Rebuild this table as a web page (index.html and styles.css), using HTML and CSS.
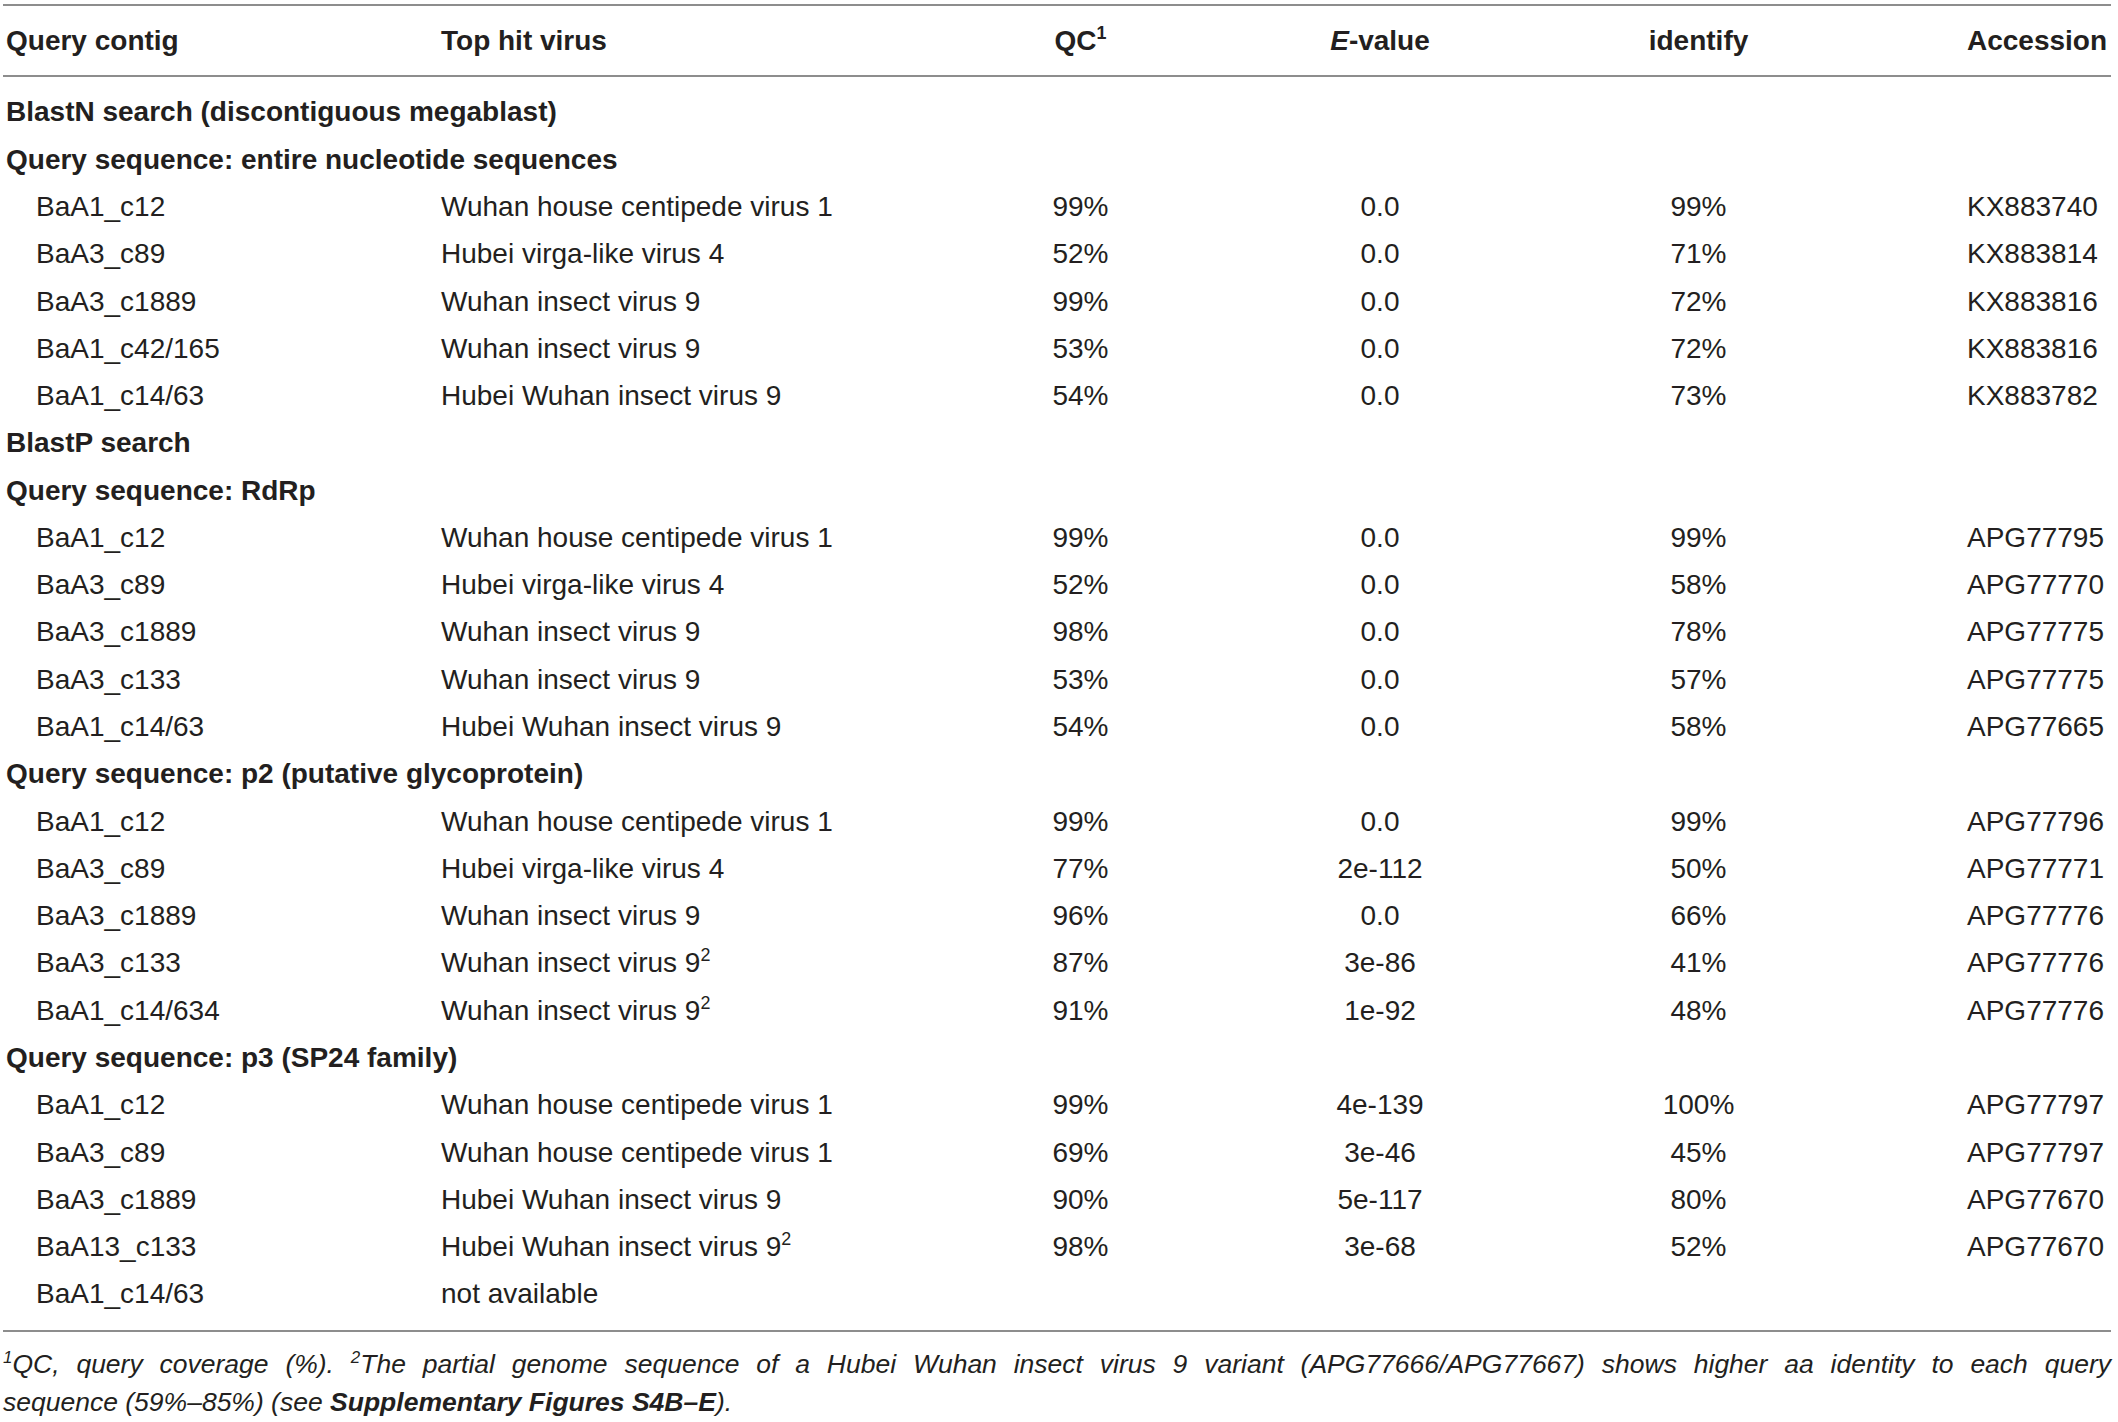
FILE: index.html
```html
<!DOCTYPE html>
<html lang="en">
<head>
    <meta charset="UTF-8">
    <meta name="viewport" content="width=device-width, initial-scale=1.0">
    <title>Blast search results</title>
    <link rel="stylesheet" href="styles.css">
</head>
<body>
    <table class="blast">
        <colgroup>
            <col class="col-contig">
            <col class="col-virus">
            <col class="col-qc">
            <col class="col-eval">
            <col class="col-ident">
            <col class="col-acc">
        </colgroup>
        <thead>
            <tr>
                <th class="contig">Query contig</th>
                <th>Top hit virus</th>
                <th class="mid">QC<sup>1</sup></th>
                <th class="mid"><i>E</i>-value</th>
                <th class="mid">identify</th>
                <th class="acc">Accession</th>
            </tr>
        </thead>
        <tbody>
            <tr class="group"><td colspan="6">BlastN search (discontiguous megablast)</td></tr>
            <tr class="group"><td colspan="6">Query sequence: entire nucleotide sequences</td></tr>
            <tr><td class="contig">BaA1_c12</td><td>Wuhan house centipede virus 1</td><td class="mid">99%</td><td class="mid">0.0</td><td class="mid">99%</td><td class="acc">KX883740</td></tr>
            <tr><td class="contig">BaA3_c89</td><td>Hubei virga-like virus 4</td><td class="mid">52%</td><td class="mid">0.0</td><td class="mid">71%</td><td class="acc">KX883814</td></tr>
            <tr><td class="contig">BaA3_c1889</td><td>Wuhan insect virus 9</td><td class="mid">99%</td><td class="mid">0.0</td><td class="mid">72%</td><td class="acc">KX883816</td></tr>
            <tr><td class="contig">BaA1_c42/165</td><td>Wuhan insect virus 9</td><td class="mid">53%</td><td class="mid">0.0</td><td class="mid">72%</td><td class="acc">KX883816</td></tr>
            <tr><td class="contig">BaA1_c14/63</td><td>Hubei Wuhan insect virus 9</td><td class="mid">54%</td><td class="mid">0.0</td><td class="mid">73%</td><td class="acc">KX883782</td></tr>

            <tr class="group"><td colspan="6">BlastP search</td></tr>
            <tr class="group"><td colspan="6">Query sequence: RdRp</td></tr>
            <tr><td class="contig">BaA1_c12</td><td>Wuhan house centipede virus 1</td><td class="mid">99%</td><td class="mid">0.0</td><td class="mid">99%</td><td class="acc">APG77795</td></tr>
            <tr><td class="contig">BaA3_c89</td><td>Hubei virga-like virus 4</td><td class="mid">52%</td><td class="mid">0.0</td><td class="mid">58%</td><td class="acc">APG77770</td></tr>
            <tr><td class="contig">BaA3_c1889</td><td>Wuhan insect virus 9</td><td class="mid">98%</td><td class="mid">0.0</td><td class="mid">78%</td><td class="acc">APG77775</td></tr>
            <tr><td class="contig">BaA3_c133</td><td>Wuhan insect virus 9</td><td class="mid">53%</td><td class="mid">0.0</td><td class="mid">57%</td><td class="acc">APG77775</td></tr>
            <tr><td class="contig">BaA1_c14/63</td><td>Hubei Wuhan insect virus 9</td><td class="mid">54%</td><td class="mid">0.0</td><td class="mid">58%</td><td class="acc">APG77665</td></tr>

            <tr class="group"><td colspan="6">Query sequence: p2 (putative glycoprotein)</td></tr>
            <tr><td class="contig">BaA1_c12</td><td>Wuhan house centipede virus 1</td><td class="mid">99%</td><td class="mid">0.0</td><td class="mid">99%</td><td class="acc">APG77796</td></tr>
            <tr><td class="contig">BaA3_c89</td><td>Hubei virga-like virus 4</td><td class="mid">77%</td><td class="mid">2e-112</td><td class="mid">50%</td><td class="acc">APG77771</td></tr>
            <tr><td class="contig">BaA3_c1889</td><td>Wuhan insect virus 9</td><td class="mid">96%</td><td class="mid">0.0</td><td class="mid">66%</td><td class="acc">APG77776</td></tr>
            <tr><td class="contig">BaA3_c133</td><td>Wuhan insect virus 9<sup>2</sup></td><td class="mid">87%</td><td class="mid">3e-86</td><td class="mid">41%</td><td class="acc">APG77776</td></tr>
            <tr><td class="contig">BaA1_c14/634</td><td>Wuhan insect virus 9<sup>2</sup></td><td class="mid">91%</td><td class="mid">1e-92</td><td class="mid">48%</td><td class="acc">APG77776</td></tr>

            <tr class="group"><td colspan="6">Query sequence: p3 (SP24 family)</td></tr>
            <tr><td class="contig">BaA1_c12</td><td>Wuhan house centipede virus 1</td><td class="mid">99%</td><td class="mid">4e-139</td><td class="mid">100%</td><td class="acc">APG77797</td></tr>
            <tr><td class="contig">BaA3_c89</td><td>Wuhan house centipede virus 1</td><td class="mid">69%</td><td class="mid">3e-46</td><td class="mid">45%</td><td class="acc">APG77797</td></tr>
            <tr><td class="contig">BaA3_c1889</td><td>Hubei Wuhan insect virus 9</td><td class="mid">90%</td><td class="mid">5e-117</td><td class="mid">80%</td><td class="acc">APG77670</td></tr>
            <tr><td class="contig">BaA13_c133</td><td>Hubei Wuhan insect virus 9<sup>2</sup></td><td class="mid">98%</td><td class="mid">3e-68</td><td class="mid">52%</td><td class="acc">APG77670</td></tr>
            <tr><td class="contig">BaA1_c14/63</td><td>not available</td><td class="mid"></td><td class="mid"></td><td class="mid"></td><td class="acc"></td></tr>
        </tbody>
    </table>

    <p class="notes">
        <span class="first-line"><sup>1</sup>QC, query coverage (%). <sup>2</sup>The partial genome sequence of a Hubei Wuhan insect virus 9 variant (APG77666/APG77667) shows higher aa identity to each query</span>
        <span>sequence (59%–85%) (see <b>Supplementary Figures S4B–E</b>).</span>
    </p>
</body>
</html>
```

FILE: styles.css
```css
body {
    margin: 0;
    padding: 4px 0 0 3px;
    font-family: "Liberation Sans", Arial, sans-serif;
    color: #231f20;
    background-color: #fff;
}

.blast {
    width: 2108px;
    table-layout: fixed;
    border-collapse: separate;
    border-spacing: 0;
    font-size: 28px;
    border-bottom: 2px solid #8d8d8d;
}

.col-contig { width: 438px; }
.col-virus { width: 499px; }
.col-qc { width: 281px; }
.col-eval { width: 318px; }
.col-ident { width: 319px; }
.col-acc { width: 253px; }

th {
    padding: 0;
    line-height: 69px;
    font-weight: bold;
    text-align: left;
    border-top: 2px solid #8d8d8d;
    border-bottom: 2px solid #8d8d8d;
    white-space: nowrap;
}

td {
    padding: 0;
    line-height: 47.28px;
    white-space: nowrap;
}

tbody tr:first-child td {
    padding-top: 11.4px;
}

tbody tr:last-child td {
    padding-bottom: 12px;
}

th.contig {
    padding-left: 3px;
}

td.contig {
    padding-left: 33px;
}

.group td {
    padding-left: 3px;
    font-weight: bold;
}

.mid {
    text-align: center;
}

th.acc,
td.acc {
    padding-left: 109px;
}

sup {
    font-size: 0.64em;
    line-height: 0;
    vertical-align: 0.6em;
}

.notes {
    width: 2108px;
    margin: 13px 0 0;
    font-size: 26.5px;
    line-height: 38px;
    font-style: italic;
    text-align: justify;
}

.notes span {
    display: block;
}

.notes .first-line {
    text-align-last: justify;
}
```
